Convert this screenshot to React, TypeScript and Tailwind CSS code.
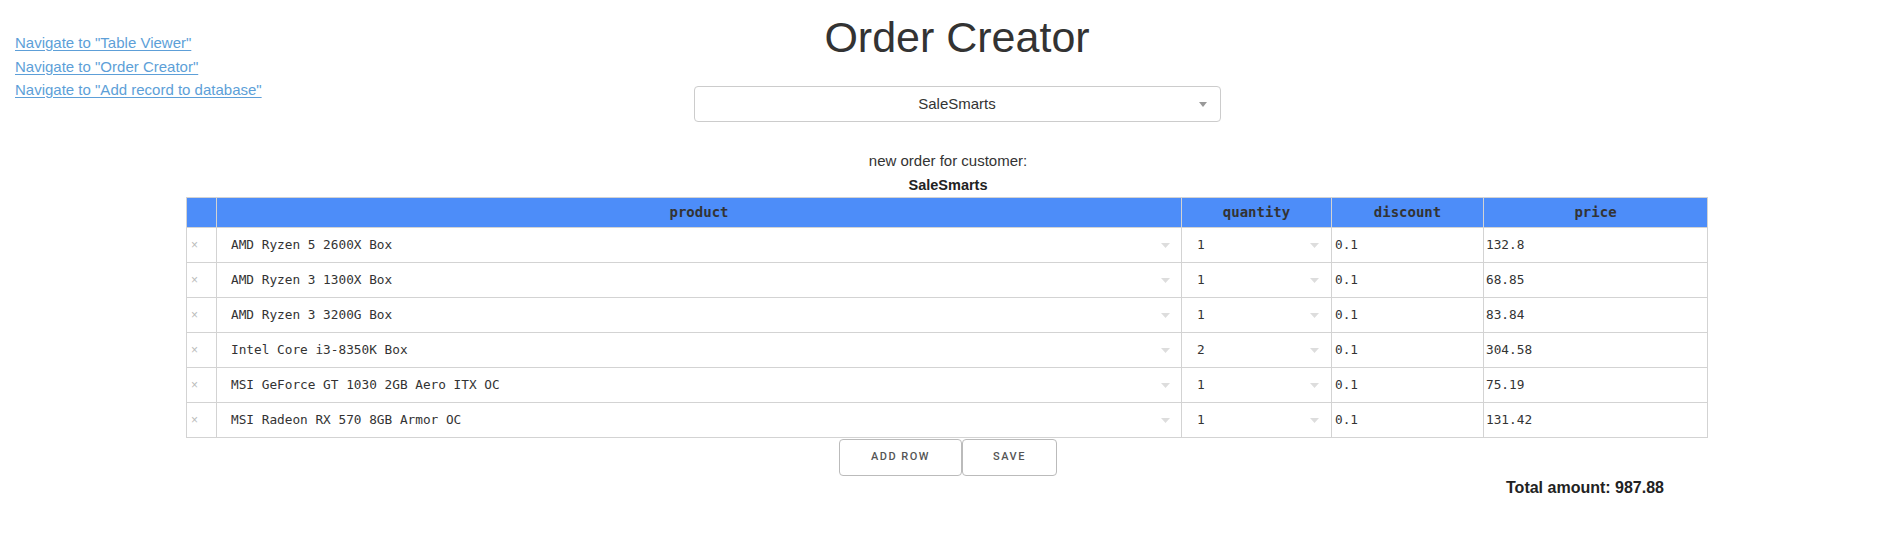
const rows = [
  { product: 'AMD Ryzen 5 2600X Box', quantity: 1, discount: '0.1', price: '132.8' },
  { product: 'AMD Ryzen 3 1300X Box', quantity: 1, discount: '0.1', price: '68.85' },
  { product: 'AMD Ryzen 3 3200G Box', quantity: 1, discount: '0.1', price: '83.84' },
  { product: 'Intel Core i3-8350K Box', quantity: 2, discount: '0.1', price: '304.58' },
  { product: 'MSI GeForce GT 1030 2GB Aero ITX OC', quantity: 1, discount: '0.1', price: '75.19' },
  { product: 'MSI Radeon RX 570 8GB Armor OC', quantity: 1, discount: '0.1', price: '131.42' },
];

const links = ['Navigate to "Table Viewer"', 'Navigate to "Order Creator"', 'Navigate to "Add record to database"'];

function Caret({ color }: { color: string }) {
  return (
    <svg width="9" height="5" viewBox="0 0 9 5" className="shrink-0">
      <path d="M0 0h9L4.5 5z" fill={color} />
    </svg>
  );
}

export default function App() {
  return (
    <div className="min-h-[538px] bg-white font-['Liberation_Sans',Arial,sans-serif] text-[#333]">
      {/* header: nav links sit over the centered title block */}
      <div className="grid">
        <nav className="col-start-1 row-start-1 self-start justify-self-start z-10 pl-[15px] pt-[31px] flex flex-col">
          {links.map((l) => (
            <a key={l} href="#" className="text-[15px] leading-[23.5px] text-[#5d9fd8] underline underline-offset-2">
              {l}
            </a>
          ))}
        </nav>
        <div className="col-start-1 row-start-1 flex flex-col items-center pl-[25px]">
          <h1 className="mt-[13px] text-[43px] leading-[49px] text-[#333]">Order Creator</h1>
          <div className="mt-[24px] w-[527px] h-[36px] border border-[#ccc] rounded-[4px] flex items-center relative">
            <span className="flex-1 text-center text-[15px] text-[#333]">SaleSmarts</span>
            <span className="absolute right-[13px] top-[15px]">
              <svg width="8" height="5" viewBox="0 0 8 5">
                <path d="M0 0h8L4 5z" fill="#999" />
              </svg>
            </span>
          </div>
        </div>
      </div>

      <div className="mt-[27px] pl-[7px] text-center text-[15px] leading-[24px]">
        <div>new order for customer:</div>
        <div className="font-bold text-[14.5px] text-[#222]">SaleSmarts</div>
      </div>

      {/* order table */}
      <div className="ml-[186px] w-[1522px] grid grid-cols-[30px_965px_150px_152px_224px] border-t border-l border-[#d3d3d3] font-['DejaVu_Sans_Mono',monospace] text-[#333]">
        <div className="h-[30px] bg-[#4d8df9] border-r border-b border-[#d3d3d3]" />
        {['product', 'quantity', 'discount', 'price'].map((h) => (
          <div
            key={h}
            className="h-[30px] bg-[#4d8df9] border-r border-b border-[#d3d3d3] flex items-center justify-center text-[14px] font-bold text-[#333]"
          >
            {h}
          </div>
        ))}
        {rows.map((r, i) => (
          <div key={i} className="contents">
            <div className="h-[35px] border-r border-b border-[#d3d3d3] flex items-center pl-[4px] text-[12px] text-[#bbb] font-['Liberation_Sans',Arial,sans-serif]">
              ×
            </div>
            <div className="h-[35px] border-r border-b border-[#d3d3d3] flex items-center justify-between pl-[14px] pr-[11px] text-[12.75px]">
              <span>{r.product}</span>
              <Caret color="#ddd" />
            </div>
            <div className="h-[35px] border-r border-b border-[#d3d3d3] flex items-center justify-between pl-[15px] pr-[12px] text-[12.75px]">
              <span>{r.quantity}</span>
              <Caret color="#ddd" />
            </div>
            <div className="h-[35px] border-r border-b border-[#d3d3d3] flex items-center pl-[3px] text-[12.75px]">
              {r.discount}
            </div>
            <div className="h-[35px] border-r border-b border-[#d3d3d3] flex items-center pl-[2px] text-[12.75px]">
              {r.price}
            </div>
          </div>
        ))}
      </div>

      <div className="flex justify-center pl-[7px] mt-[1px] font-['Roboto',sans-serif]">
        <button className="w-[123px] h-[37px] border border-[#bbb] rounded-[4px] bg-white text-[11px] font-medium tracking-[1.5px] text-[#555] uppercase">
          Add row
        </button>
        <button className="w-[95px] h-[37px] border border-[#bbb] rounded-[4px] bg-white text-[11px] font-medium tracking-[1.5px] text-[#555] uppercase">
          Save
        </button>
      </div>

      <div className="w-[1708px] pr-[44px] mt-[2px] text-right text-[16px] leading-[20px] font-bold text-[#222]">
        Total amount: 987.88
      </div>
    </div>
  );
}
